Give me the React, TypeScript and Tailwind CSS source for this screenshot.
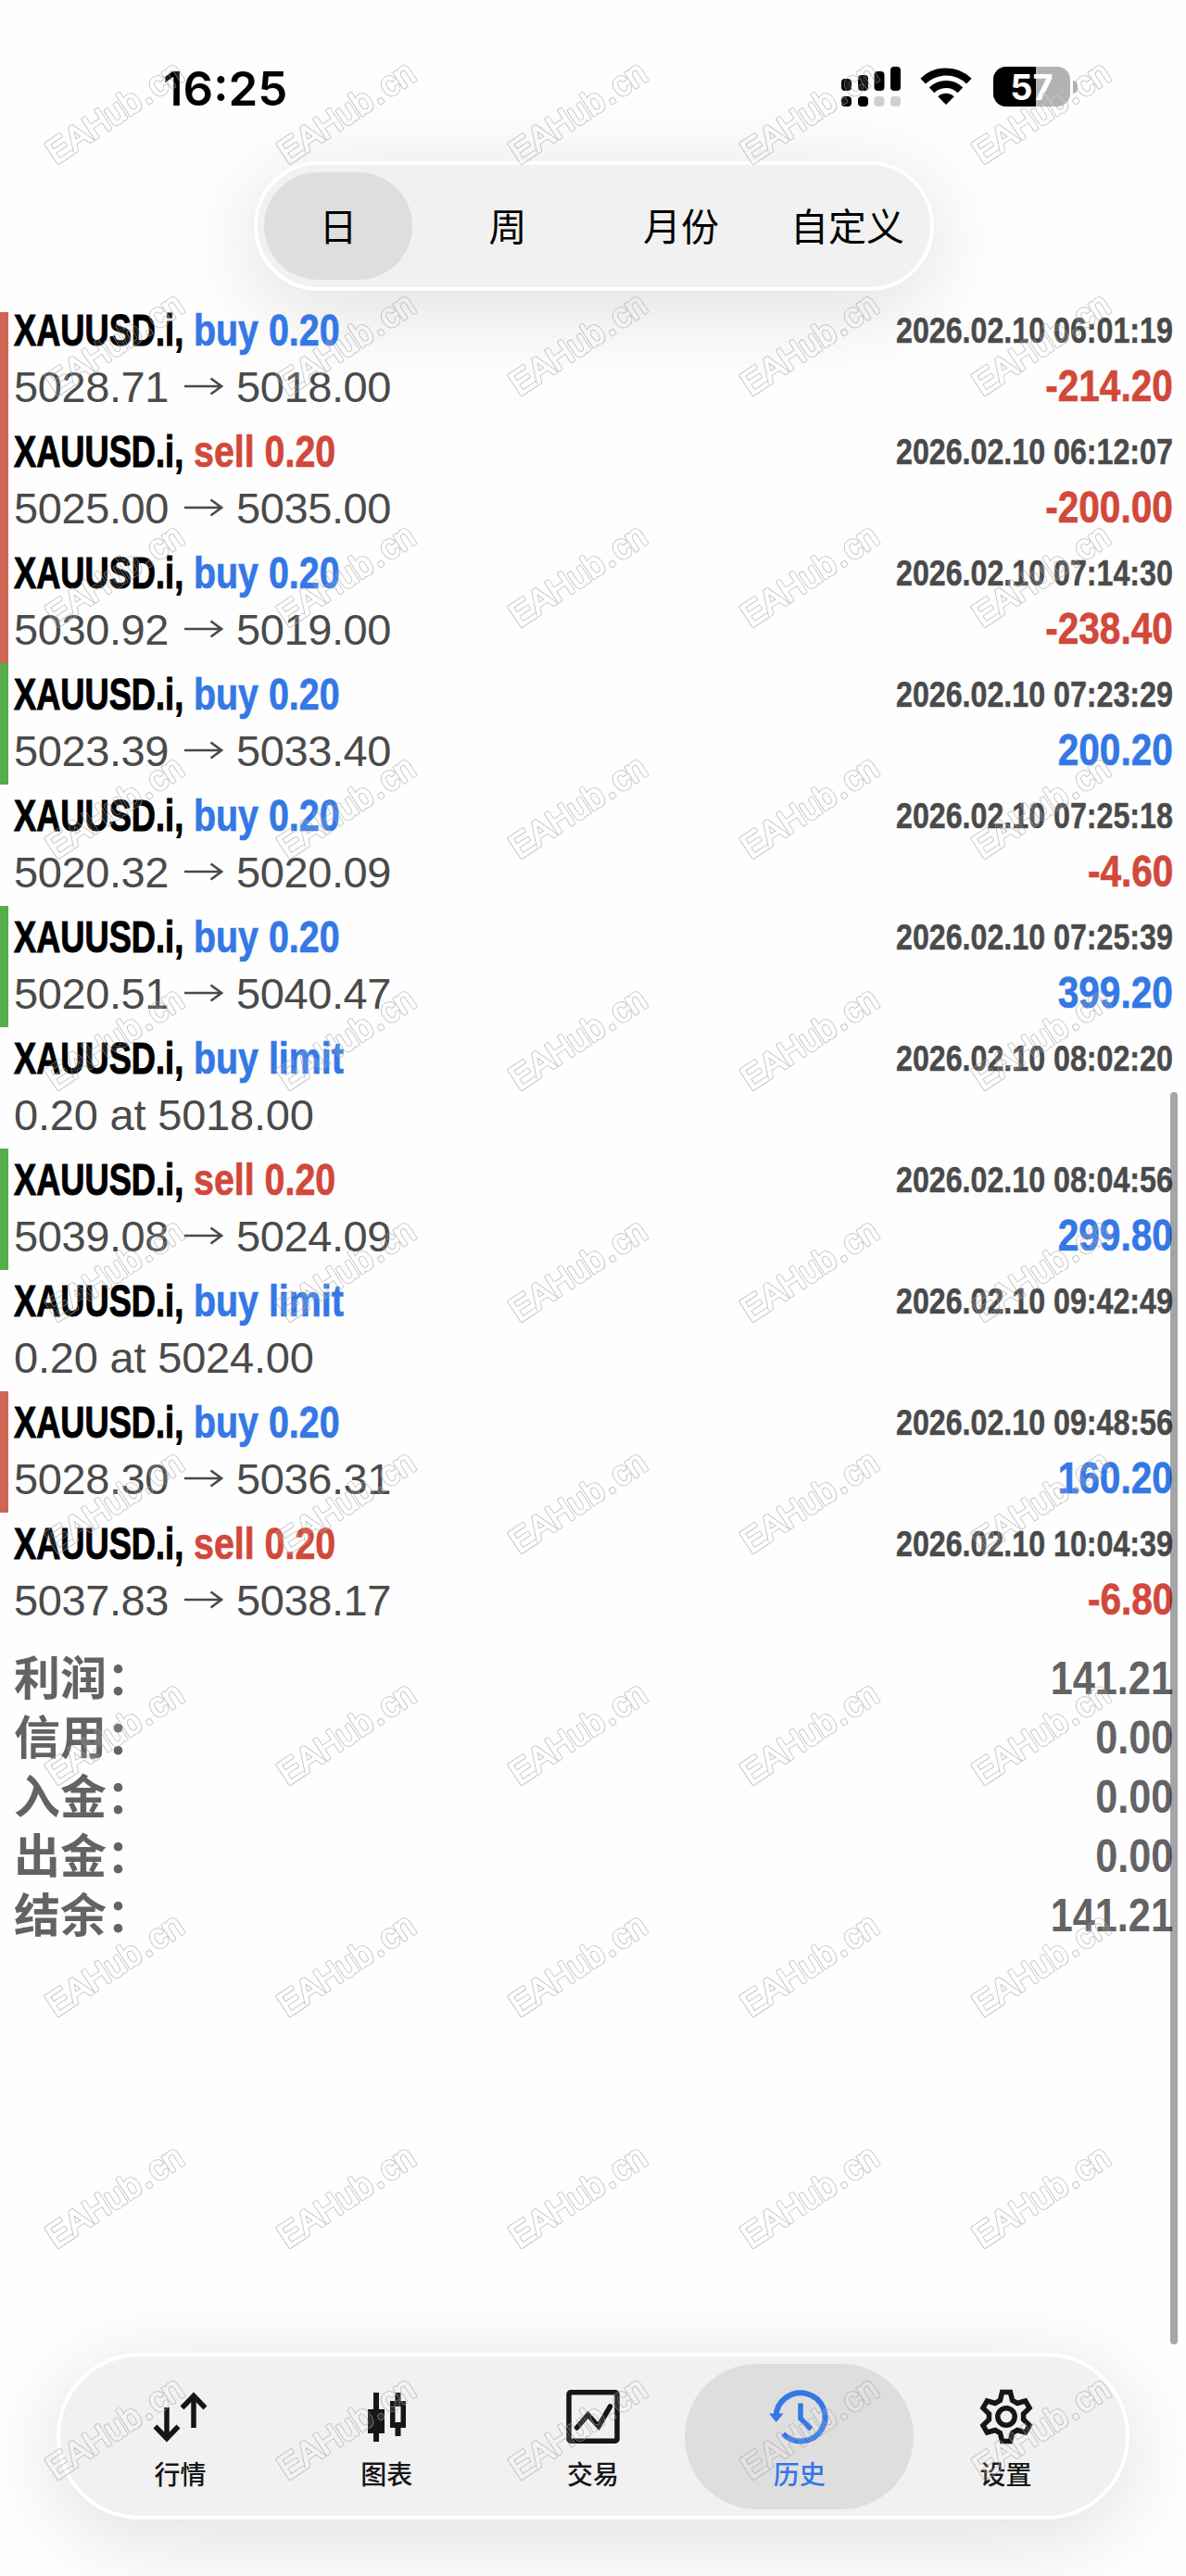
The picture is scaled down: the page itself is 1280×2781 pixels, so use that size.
import type { ReactNode } from 'react';
import clsx from 'clsx';

type Deal = {
  type: 'buy' | 'sell';
  size: string;
  time: string;
  from?: string;
  to?: string;
  note?: string;
  profit?: string;
  mark?: 'tp' | 'sl';
};

const deals: Deal[] = [
  { type: 'buy', size: '0.20', time: '2026.02.10 06:01:19', from: '5028.71', to: '5018.00', profit: '-214.20', mark: 'sl' },
  { type: 'sell', size: '0.20', time: '2026.02.10 06:12:07', from: '5025.00', to: '5035.00', profit: '-200.00', mark: 'sl' },
  { type: 'buy', size: '0.20', time: '2026.02.10 07:14:30', from: '5030.92', to: '5019.00', profit: '-238.40', mark: 'sl' },
  { type: 'buy', size: '0.20', time: '2026.02.10 07:23:29', from: '5023.39', to: '5033.40', profit: '200.20', mark: 'tp' },
  { type: 'buy', size: '0.20', time: '2026.02.10 07:25:18', from: '5020.32', to: '5020.09', profit: '-4.60' },
  { type: 'buy', size: '0.20', time: '2026.02.10 07:25:39', from: '5020.51', to: '5040.47', profit: '399.20', mark: 'tp' },
  { type: 'buy', size: 'limit', time: '2026.02.10 08:02:20', note: '0.20 at 5018.00' },
  { type: 'sell', size: '0.20', time: '2026.02.10 08:04:56', from: '5039.08', to: '5024.09', profit: '299.80', mark: 'tp' },
  { type: 'buy', size: 'limit', time: '2026.02.10 09:42:49', note: '0.20 at 5024.00' },
  { type: 'buy', size: '0.20', time: '2026.02.10 09:48:56', from: '5028.30', to: '5036.31', profit: '160.20', mark: 'sl' },
  { type: 'sell', size: '0.20', time: '2026.02.10 10:04:39', from: '5037.83', to: '5038.17', profit: '-6.80' },
];

const summary = [
  { label: '利润：', value: '141.21' },
  { label: '信用：', value: '0.00' },
  { label: '入金：', value: '0.00' },
  { label: '出金：', value: '0.00' },
  { label: '结余：', value: '141.21' },
];

function StatusBar() {
  return (
    <div className="flex h-[115px] pt-[71px] pl-[176px] pr-[117px] justify-between">
      <span className="font-[Inter,sans-serif] font-semibold text-[51px] leading-[49px] text-black">16:25</span>
      <div className="flex items-start pt-px">
        <svg width="64" height="43" viewBox="0 0 64 43" fill="#000">
          <rect x="0" y="13" width="11" height="13" rx="4" />
          <rect x="18" y="9" width="11" height="17" rx="4" />
          <rect x="35.5" y="5" width="11" height="21" rx="4" />
          <rect x="53" y="0" width="11" height="26" rx="4" />
          <rect x="0" y="32" width="11" height="11" rx="4" />
          <rect x="18" y="32" width="11" height="11" rx="4" />
          <rect x="35.5" y="32" width="11" height="11" rx="4" fill="#d0d0d0" />
          <rect x="53" y="32" width="11" height="11" rx="4" fill="#d0d0d0" />
        </svg>
        <svg className="ml-[21px] mt-px" width="56" height="41" viewBox="0 0 56 41" fill="none" stroke="#000" strokeWidth="8">
          <path d="M3.2 14.6a35.5 35.5 0 0 1 49.6 0" />
          <path d="M12.6 24.4a22 22 0 0 1 30.8 0" />
          <path d="M19.3 31.2a12.4 12.4 0 0 1 17.4 0L28 40z" fill="#000" stroke="none" />
        </svg>
        <div className="ml-[23px] flex items-center">
          <div className="relative flex h-[43px] w-[83px] items-center justify-center overflow-hidden rounded-[14px] bg-[#b3b3b3]">
            <div className="absolute inset-y-0 left-0 w-[46px] bg-black" />
            <span className="relative font-[Inter,sans-serif] text-[38px] font-bold leading-none text-white">57</span>
          </div>
          <div className="ml-[3px] h-[14px] w-[5px] rounded-r-full bg-[#b3b3b3]" />
        </div>
      </div>
    </div>
  );
}

function PeriodTabs() {
  return (
    <div className="mt-[59px] ml-[274px] flex h-[140px] w-[734px] items-center rounded-full border-4 border-white bg-[#f1f1f1] pl-[7px] text-[41px] text-black shadow-[0_18px_96px_rgba(0,0,0,0.13)]">
      <div className="flex h-[116px] w-[160px] shrink-0 items-center justify-center rounded-[58px] bg-[#dedede] pt-[5px]">日</div>
      <div className="w-[206px] shrink-0 pt-[5px] text-center">周</div>
      <div className="w-[168px] shrink-0 pt-[5px] text-center">月份</div>
      <div className="shrink-0 pt-[5px] pl-[34px]">自定义</div>
    </div>
  );
}

function Arrow() {
  return (
    <svg className="mx-4" width="43" height="22" viewBox="0 0 43 22" fill="none" stroke="#4a4a4a" strokeWidth="2.6">
      <path d="M1 11h39M29.500 2.500 41 11 29.500 19.500" />
    </svg>
  );
}

function DealRow({ deal }: { deal: Deal }) {
  return (
    <div
      className={clsx(
        'h-[131px] border-l-[9px] pt-[5px] pl-[6px] pr-[14px]',
        deal.mark === 'sl' && 'border-[#cf6554]',
        deal.mark === 'tp' && 'border-[#55ad4b]',
        !deal.mark && 'border-transparent',
      )}
    >
      <div className="flex h-[57px] items-center justify-between text-[48px] font-bold leading-[38px] whitespace-pre">
        <div className="flex">
          <span className="w-[194px] origin-left scale-x-[0.755] text-black [-webkit-text-stroke:1px]">XAUUSD.i,</span>
          <span className={clsx('origin-left scale-x-[0.82] [-webkit-text-stroke:0.7px]', deal.type === 'buy' ? 'text-[#3478e5]' : 'text-[#d2483a]')}>
            {deal.type} {deal.size}
          </span>
        </div>
        <span className="origin-right scale-x-[0.847] text-[38px] text-[#4a4a4a] [-webkit-text-stroke:0.5px]">{deal.time}</span>
      </div>
      <div className="flex h-[64px] items-center justify-between leading-none">
        <div className="flex items-center text-[47px] tracking-[-0.4px] text-[#4a4a4a]">
          {deal.note ? (
            <span className="tracking-[-0.2px]">{deal.note}</span>
          ) : (
            <>
              <span className="w-[167px]">{deal.from}</span>
              <Arrow />
              <span className="-ml-[2px]">{deal.to}</span>
            </>
          )}
        </div>
        {deal.profit && (
          <span
            className={clsx(
              'origin-right scale-x-[0.845] text-[48px] font-bold [-webkit-text-stroke:0.7px]',
              deal.profit.startsWith('-') ? 'text-[#d2483a]' : 'text-[#3478e5]',
            )}
          >
            {deal.profit}
          </span>
        )}
      </div>
    </div>
  );
}

function QuotesIcon() {
  return (
    <svg width="60" height="60" viewBox="0 0 60 60" fill="none" stroke="currentColor" strokeWidth="5.500">
      <path d="M16 20v35M3.500 40.500 16 53.500 28.500 40.500" />
      <path d="M45 42V7M32.500 20.500 45 7.500 57.500 20.500" />
    </svg>
  );
}

function ChartIcon() {
  return (
    <svg width="60" height="60" viewBox="0 0 60 60" fill="currentColor">
      <path d="M16 4h6v18h6v26h-6v9h-6v-9h-6V22h6z" />
      <path fillRule="evenodd" d="M39.500 4h6v9H51v29h-5.500v9h-6v-9H34V13h5.500zM39.500 19v17h6V19z" />
    </svg>
  );
}

function TradeIcon() {
  return (
    <svg width="60" height="60" viewBox="0 0 60 60" fill="none" stroke="currentColor" strokeWidth="5.500">
      <rect x="4" y="3.750" width="52" height="52.500" rx="2" />
      <path d="M12.500 42 24.500 28 36 40.500 48.500 19" strokeLinecap="round" />
    </svg>
  );
}

function HistoryIcon() {
  return (
    <svg width="66" height="60" viewBox="-34 -30 66 60" fill="none" stroke="currentColor" strokeWidth="6">
      <path d="M-26.500 0a26.500 26 0 1 1 7.500 18.500" />
      <path d="M-34-3.500h15.500L-26.200 6z" fill="currentColor" stroke="none" />
      <path d="M0-14.500V2l11.500 11.500" strokeWidth="5.500" />
    </svg>
  );
}

// six teeth, each one the same profile turned by 60 degrees
const gearPoints = [0, 60, 120, 180, 240, 300]
  .flatMap((deg) => {
    const a = (deg * Math.PI) / 180;
    return [[-6.6, -17.6], [-4.4, -26.4], [4.4, -26.4], [6.6, -17.6]].map(
      ([x, y]) => `${(x * Math.cos(a) - y * Math.sin(a)).toFixed(2)},${(x * Math.sin(a) + y * Math.cos(a)).toFixed(2)}`,
    );
  })
  .join(' ');

function SettingsIcon() {
  return (
    <svg width="60" height="60" viewBox="-30 -30 60 60" fill="none" stroke="currentColor" strokeWidth="5.500">
      <polygon points={gearPoints} />
      <circle r="9.200" />
    </svg>
  );
}

function NavItem({ icon, label, active }: { icon: ReactNode; label: string; active?: boolean }) {
  return (
    <div
      className={clsx(
        'flex h-[157px] flex-1 flex-col items-center pt-[27px]',
        active ? 'text-[#3478e5]' : 'text-[#161616]',
      )}
    >
      {icon}
      <span className="mt-[15px] text-[28px] font-medium leading-[38px]">{label}</span>
    </div>
  );
}

function BottomNav() {
  return (
    <nav className="mx-[61px] mt-auto mb-[61px] flex h-[180px] items-center rounded-full border-4 border-white bg-[#f1f1f1] pl-[18px] pr-[18px] shadow-[0_18px_96px_rgba(0,0,0,0.13)]">
      <NavItem icon={<QuotesIcon />} label="行情" />
      <NavItem icon={<ChartIcon />} label="图表" />
      <NavItem icon={<TradeIcon />} label="交易" />
      <div className="relative flex flex-1">
        <div className="absolute -inset-x-[12px] inset-y-0 rounded-[78px] bg-[#dedede]" />
        <div className="relative flex flex-1">
          <NavItem icon={<HistoryIcon />} label="历史" active />
        </div>
      </div>
      <NavItem icon={<SettingsIcon />} label="设置" />
    </nav>
  );
}

// outlined, tiled watermark: a wide stroke with a slightly thinner one cut out of it
function Watermark() {
  const letters = (
    <g transform="translate(60.500 178) rotate(-33.500)">
      <text textLength="114" lengthAdjust="spacingAndGlyphs">EAHub</text>
      <text x="117">.</text>
      <text x="130" textLength="38" lengthAdjust="spacingAndGlyphs">cn</text>
    </g>
  );
  return (
    <svg className="pointer-events-none absolute inset-0" width="1280" height="2781">
      <defs>
        <mask id="outline" maskUnits="userSpaceOnUse" x="0" y="0" width="250" height="250">
          <g className="font-[Liberation_Sans,sans-serif] text-[37px]" fill="#fff" stroke="#fff" strokeWidth="3.200" strokeLinejoin="round">{letters}</g>
          <g className="font-[Liberation_Sans,sans-serif] text-[37px]" fill="#000" stroke="#000" strokeWidth="1.700" strokeLinejoin="round">{letters}</g>
        </mask>
        <pattern id="tile" width="250" height="250" patternUnits="userSpaceOnUse">
          <g className="font-[Liberation_Sans,sans-serif] text-[37px]" fill="#fff" fillOpacity="0.120">{letters}</g>
          <rect width="250" height="250" fill="#a8a8a8" fillOpacity="0.750" mask="url(#outline)" />
        </pattern>
      </defs>
      <rect width="1280" height="2781" fill="url(#tile)" />
    </svg>
  );
}

export default function App() {
  return (
    <div className="relative flex h-[2781px] w-[1280px] flex-col overflow-hidden bg-[#fefefe] font-['Liberation_Sans','Noto_Sans_CJK_SC',sans-serif]">
      <header className="h-[337px]">
        <StatusBar />
        <PeriodTabs />
      </header>

      <main className="relative overflow-hidden">
        <div className="-mt-[14px]">
          {deals.map((deal) => (
            <DealRow key={deal.time} deal={deal} />
          ))}
        </div>
        <div className="mt-[16px] pl-[15px] pr-[14px] text-[50px] font-bold text-[#636365]">
          {summary.map((item) => (
            <div key={item.label} className="flex h-16 items-center justify-between">
              <span className="pt-0.5">{item.label}</span>
              <span className="origin-right scale-x-[0.865]">{item.value}</span>
            </div>
          ))}
        </div>
      </main>

      <BottomNav />

      {/* scroll indicator */}
      <div className="absolute top-[1179px] right-[9px] h-[1352px] w-[8px] rounded-full bg-black/35" />
      <Watermark />
    </div>
  );
}
